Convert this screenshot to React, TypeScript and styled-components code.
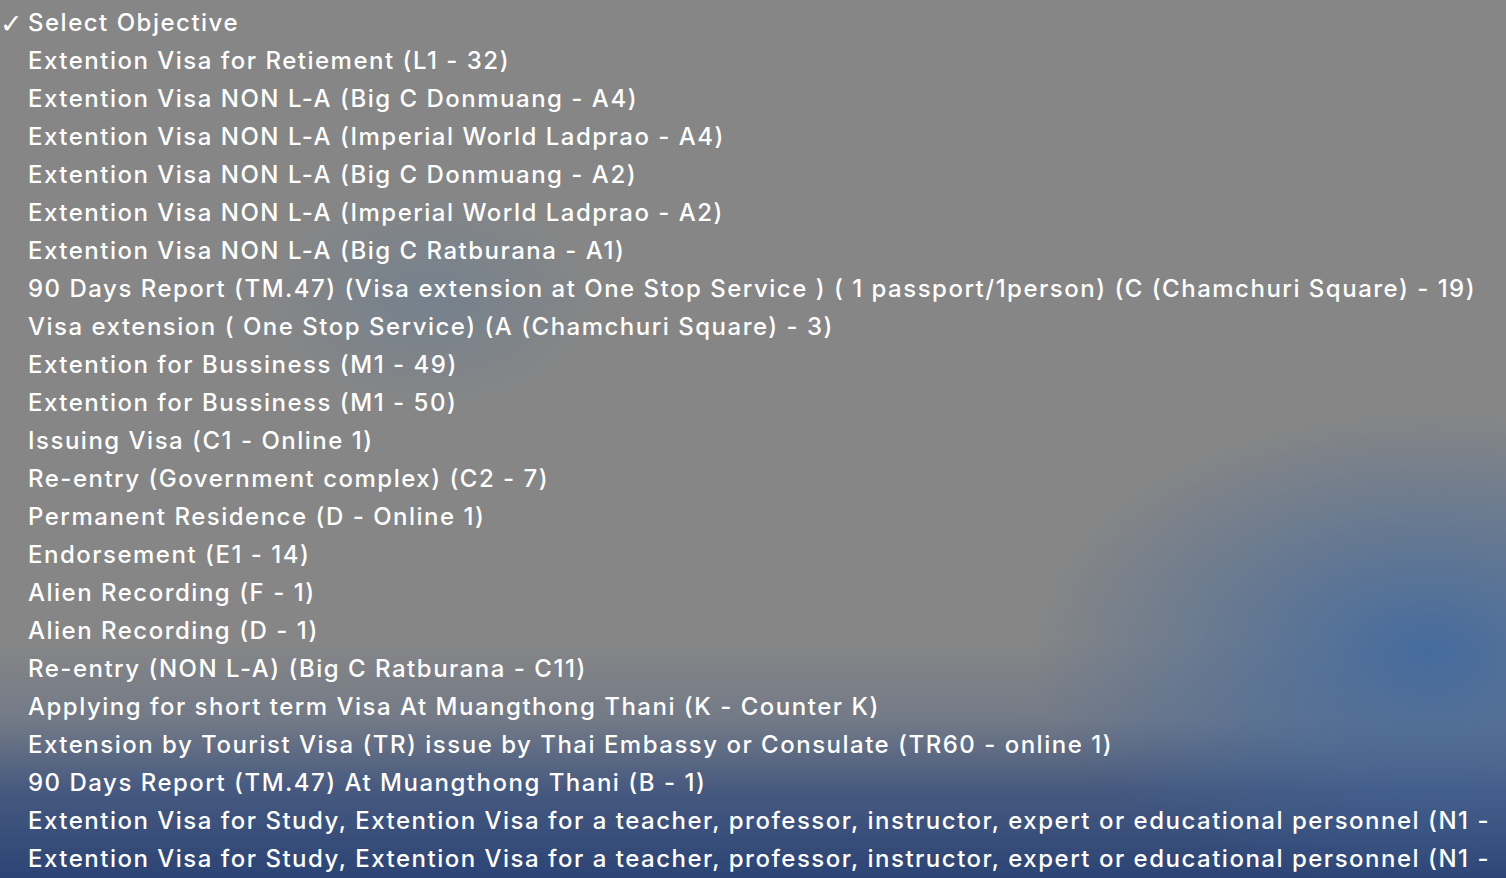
import styled, { createGlobalStyle } from "styled-components";

const options = [
  "Select Objective",
  "Extention Visa for Retiement (L1 - 32)",
  "Extention Visa NON L-A (Big C Donmuang - A4)",
  "Extention Visa NON L-A (Imperial World Ladprao - A4)",
  "Extention Visa NON L-A (Big C Donmuang - A2)",
  "Extention Visa NON L-A (Imperial World Ladprao - A2)",
  "Extention Visa NON L-A (Big C Ratburana - A1)",
  "90 Days Report (TM.47) (Visa extension at One Stop Service ) ( 1 passport/1person) (C (Chamchuri Square) - 19)",
  "Visa extension ( One Stop Service) (A (Chamchuri Square) - 3)",
  "Extention for Bussiness (M1 - 49)",
  "Extention for Bussiness (M1 - 50)",
  "Issuing Visa (C1 - Online 1)",
  "Re-entry (Government complex) (C2 - 7)",
  "Permanent Residence (D - Online 1)",
  "Endorsement (E1 - 14)",
  "Alien Recording (F - 1)",
  "Alien Recording (D - 1)",
  "Re-entry (NON L-A) (Big C Ratburana - C11)",
  "Applying for short term Visa At Muangthong Thani (K - Counter K)",
  "Extension by Tourist Visa (TR) issue by Thai Embassy or Consulate (TR60 - online 1)",
  "90 Days Report (TM.47) At Muangthong Thani (B - 1)",
  "Extention Visa for Study, Extention Visa for a teacher, professor, instructor, expert or educational personnel (N1 -",
  "Extention Visa for Study, Extention Visa for a teacher, professor, instructor, expert or educational personnel (N1 -",
];

function App() {
  return (
    <>
      <Global />
      <Menu>
        {options.map((opt, i) => (
          <Option key={i}>
            <Check>{i === 0 ? "✓" : ""}</Check>
            <Label>{opt}</Label>
          </Option>
        ))}
      </Menu>
    </>
  );
}

export default App;

const Global = createGlobalStyle`
  html, body {
    margin: 0;
    height: 100%;
    overflow: hidden;
  }
  body {
    background:
      radial-gradient(ellipse 170px 110px at 430px 300px, rgba(85, 120, 155, 0.35), transparent),
      radial-gradient(ellipse 400px 240px at 1430px 650px, rgba(62, 104, 160, 0.9), transparent),
      linear-gradient(to bottom, #868686 0, #868686 640px, #737a87 720px, #46597f 790px, #2c4475 878px);
    font-family: Inter, "Noto Sans", sans-serif;
  }
`;

const Menu = styled.ul`
  list-style: none;
  margin: 0;
  padding: 3px 0 0;
  width: 1506px;
  height: 878px;
  overflow: hidden;
`;

const Option = styled.li`
  display: flex;
  align-items: center;
  height: 38px;
  white-space: nowrap;
  color: #fff;
`;

const Check = styled.span`
  width: 28px;
  flex-shrink: 0;
  font-family: "DejaVu Sans", sans-serif;
  font-size: 27px;
  font-weight: 300;
  line-height: 1;
  margin-top: 2px;
`;

const Label = styled.span`
  font-size: 24px;
  font-weight: 500;
  letter-spacing: 1.5px;
`;
